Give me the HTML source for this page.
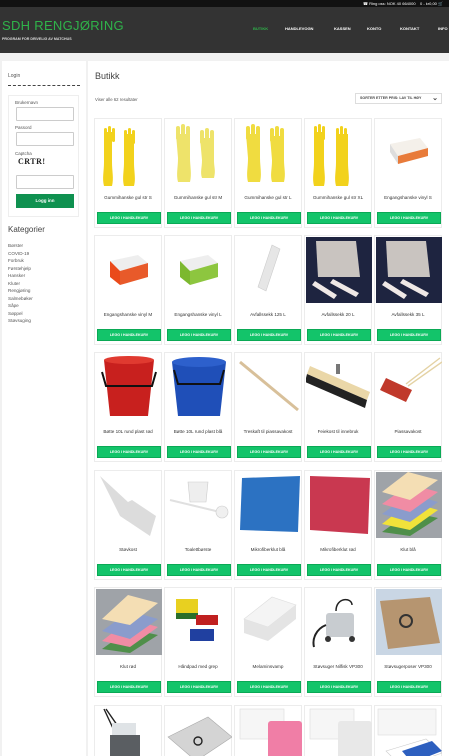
<!DOCTYPE html>
<html><head><meta charset="utf-8">
<style>
*{margin:0;padding:0;box-sizing:border-box}
html{width:449px;height:756px;overflow:hidden}
body{width:449px;height:756px;overflow:hidden;background:#f1f1f1;font-family:"Liberation Sans",sans-serif;position:relative}
.top{position:absolute;left:0;top:0;width:449px;height:7px;background:#111;color:#fff;font-size:4px;text-align:right;padding-right:6px;line-height:7px}
.hdr{position:absolute;left:0;top:7px;width:449px;height:46px;background:#333}
.logo{position:absolute;left:2px;top:11px;color:#2fb34a;font-size:13px;letter-spacing:0.3px}
.tag{position:absolute;left:2px;top:30px;color:#ddd;font-size:3.6px;font-weight:bold}
.nav{position:absolute;top:19px;font-size:4px;font-weight:bold;color:#fff}
.side{position:absolute;left:2px;top:61px;width:84px;height:700px;background:#fff}
.main{position:absolute;left:88px;top:61px;width:361px;height:700px;background:#fff}
.lbl{position:absolute;font-size:4.5px;color:#555}
.inp{position:absolute;left:14px;width:58px;height:14px;border:1px solid #ccc;border-radius:1px;background:#fff}
.card{position:absolute;width:68px;height:110px;border:1px solid #ececec;background:#fff}
.card svg{position:absolute;left:1px;top:1px}
.nm{position:absolute;left:0;top:76px;width:66px;text-align:center;font-size:4.6px;color:#333}
.btn{position:absolute;left:2px;top:93px;width:64px;height:12px;background:#13c46a;border:1px solid #0aa955;color:#fff;font-size:3.6px;font-weight:bold;text-align:center;line-height:10px}
.cat{font-size:4.6px;color:#555;line-height:7.5px}
</style></head><body>
<div class="top">&#9742; Ring oss: NOK 40 664000 &nbsp;&nbsp; 0 - kr0,00 &#128722;</div>
<div class="hdr">
<div class="logo">SDH RENGJØRING</div>
<div class="tag">PROGRAM FOR DRIVELIG AV MATCHUS</div>
<div class="nav" style="left:253px;color:#2fb34a">BUTIKK</div>
<div class="nav" style="left:285px">HANDLEVOGN</div>
<div class="nav" style="left:334px">KASSEN</div>
<div class="nav" style="left:367px">KONTO</div>
<div class="nav" style="left:400px">KONTAKT</div>
<div class="nav" style="left:438px">INFO</div>
</div>

<div class="side">
<div class="lbl" style="left:6px;top:12px;font-size:5px">Login</div>
<div style="position:absolute;left:6px;top:24px;width:72px;border-top:1px dashed #444"></div>
<div style="position:absolute;left:6px;top:34px;width:71px;height:122px;border:1px solid #eee"></div>
<div class="lbl" style="left:13px;top:39px">Brukernavn</div>
<div class="inp" style="top:46px"></div>
<div class="lbl" style="left:13px;top:64px">Passord</div>
<div class="inp" style="top:71px"></div>
<div class="lbl" style="left:13px;top:90px">Captcha</div>
<div style="position:absolute;left:16px;top:96px;font:bold 8px 'Liberation Serif',serif;color:#222;letter-spacing:0.5px">CRTR!</div>
<div class="inp" style="top:114px"></div>
<div style="position:absolute;left:14px;top:133px;width:58px;height:14px;background:#0f9150;color:#fff;font-size:4.5px;font-weight:bold;text-align:center;line-height:14px">Logg inn</div>
<div style="position:absolute;left:6px;top:164px;font-size:8px;color:#444">Kategorier</div>
<div style="position:absolute;left:6px;top:181px" class="cat">Børster<br>COVID-19<br>Forbruk<br>Førstehjelp<br>Hansker<br>Kluter<br>Rengjøring<br>Salmebøker<br>Såpe<br>Søppel<br>Støvsuging</div>
</div>

<div class="main">
<div style="position:absolute;left:7px;top:10px;font-size:9px;color:#444">Butikk</div>
<div class="lbl" style="left:7px;top:36px;font-size:4.3px">Viser alle 62 resultater</div>
<div style="position:absolute;left:267px;top:32px;width:87px;height:11px;border:1px solid #ddd;font-size:3.6px;color:#444;line-height:9px;padding-left:4px;font-weight:bold">SORTER ETTER PRIS: LAV TIL HØY<span style="position:absolute;right:3px;top:0;font-size:7px">&#8964;</span></div>
</div>

<div class="card" style="left:94px;top:118px"><svg width="66" height="68"><g fill="#f2d21c"><path d="M8 12h8v30c0 10 2 16 0 24h-8c-2-8 0-14 0-24z"/><rect x="8" y="8" width="3" height="12" rx="1.5"/><rect x="12" y="6" width="3" height="14" rx="1.5"/><rect x="16" y="8" width="3" height="14" rx="1.5"/><path d="M28 14h10v28c0 10 2 16 0 24h-10c-2-8 0-14 0-24z"/><rect x="28" y="10" width="3" height="12" rx="1.5"/><rect x="32" y="8" width="3" height="14" rx="1.5"/><rect x="36" y="10" width="3" height="14" rx="1.5"/></g></svg><div class="nm">Gummihanske gul str S</div><div class="btn">LEGG I HANDLEKURV</div></div>
<div class="card" style="left:164px;top:118px"><svg width="66" height="68"><g fill="#eee36a"><path d="M10 14h14v24c0 8 2 16 0 24h-12c-2-8 0-14 0-24z"/><rect x="10" y="6" width="4" height="14" rx="2"/><rect x="15" y="4" width="4" height="16" rx="2"/><rect x="20" y="6" width="4" height="14" rx="2"/><path d="M34 18h14v22c0 8 2 10 0 18h-12c-2-6 0-10 0-18z"/><rect x="34" y="10" width="4" height="14" rx="2"/><rect x="39" y="8" width="4" height="16" rx="2"/><rect x="44" y="10" width="4" height="14" rx="2"/></g></svg><div class="nm">Gummihanske gul str M</div><div class="btn">LEGG I HANDLEKURV</div></div>
<div class="card" style="left:234px;top:118px"><svg width="66" height="68"><g fill="#f0dc40"><path d="M10 14h14v24c0 8 2 16 0 24h-12c-2-8 0-14 0-24z"/><rect x="10" y="6" width="4" height="14" rx="2"/><rect x="15" y="4" width="4" height="16" rx="2"/><rect x="20" y="6" width="4" height="14" rx="2"/><path d="M34 16h14v24c0 8 2 14 0 22h-12c-2-8 0-12 0-22z"/><rect x="34" y="8" width="4" height="14" rx="2"/><rect x="39" y="6" width="4" height="16" rx="2"/><rect x="44" y="8" width="4" height="14" rx="2"/></g></svg><div class="nm">Gummihanske gul str L</div><div class="btn">LEGG I HANDLEKURV</div></div>
<div class="card" style="left:304px;top:118px"><svg width="66" height="68"><g fill="#f2d21c"><path d="M8 12h10v30c0 10 2 16 0 24h-10c-2-8 0-14 0-24z"/><rect x="8" y="6" width="3" height="12" rx="1.5"/><rect x="12" y="4" width="3" height="14" rx="1.5"/><rect x="16" y="6" width="3" height="14" rx="1.5"/><path d="M30 14h12v28c0 10 2 16 0 24h-12c-2-8 0-14 0-24z"/><rect x="30" y="8" width="3" height="12" rx="1.5"/><rect x="34" y="6" width="3" height="14" rx="1.5"/><rect x="38" y="8" width="3" height="14" rx="1.5"/></g></svg><div class="nm">Gummihanske gul str XL</div><div class="btn">LEGG I HANDLEKURV</div></div>
<div class="card" style="left:374px;top:118px"><svg width="66" height="68"><path d="M14 24l30-6 8 10-30 8z" fill="#f4f0ea"/><path d="M14 24l8 12v8l-8-12z" fill="#ddd"/><path d="M22 36l30-8v8l-30 8z" fill="#e87b3a"/></svg><div class="nm">Engangshanske vinyl S</div><div class="btn">LEGG I HANDLEKURV</div></div>

<div class="card" style="left:94px;top:235px"><svg width="66" height="68"><path d="M14 24l28-6 10 8-28 8z" fill="#eee"/><path d="M24 34l28-8v14l-28 8z" fill="#e85a2a"/><path d="M14 24v16l10 8v-14z" fill="#ea4a1a"/></svg><div class="nm">Engangshanske vinyl M</div><div class="btn">LEGG I HANDLEKURV</div></div>
<div class="card" style="left:164px;top:235px"><svg width="66" height="68"><path d="M14 24l28-6 10 8-28 8z" fill="#eee"/><path d="M24 34l28-8v14l-28 8z" fill="#8dc63f"/><path d="M14 24v16l10 8v-14z" fill="#7cb82f"/></svg><div class="nm">Engangshanske vinyl L</div><div class="btn">LEGG I HANDLEKURV</div></div>
<div class="card" style="left:234px;top:235px"><svg width="66" height="68"><path d="M36 8l8 4-14 42-8-4z" fill="#e6e6e6" stroke="#ccc" stroke-width=".6"/></svg><div class="nm">Avfallssekk 125 L</div><div class="btn">LEGG I HANDLEKURV</div></div>
<div class="card" style="left:304px;top:235px"><svg width="66" height="68"><rect width="66" height="66" fill="#1e2440"/><path d="M10 4h40l4 36h-42z" fill="#c9c4c0"/><path d="M6 48l22 14 3-4-22-14zM24 46l26 14 3-4-26-14z" fill="#efe8e6"/></svg><div class="nm">Avfallssekk 20 L</div><div class="btn">LEGG I HANDLEKURV</div></div>
<div class="card" style="left:374px;top:235px"><svg width="66" height="68"><rect width="66" height="66" fill="#1e2440"/><path d="M10 4h40l4 36h-42z" fill="#c9c4c0"/><path d="M6 48l22 14 3-4-22-14zM24 46l26 14 3-4-26-14z" fill="#efe8e6"/></svg><div class="nm">Avfallssekk 35 L</div><div class="btn">LEGG I HANDLEKURV</div></div>

<div class="card" style="left:94px;top:352px"><svg width="66" height="68"><path d="M8 6h50l-6 56h-38z" fill="#c8201e"/><ellipse cx="33" cy="6" rx="25" ry="4" fill="#e03a30"/><path d="M6 18l4 14h46l4-14" fill="none" stroke="#111" stroke-width="2"/></svg><div class="nm">Bøtte 10L rund plast rød</div><div class="btn">LEGG I HANDLEKURV</div></div>
<div class="card" style="left:164px;top:352px"><svg width="66" height="68"><path d="M6 8h54l-6 54h-42z" fill="#1f4fb8"/><ellipse cx="33" cy="8" rx="27" ry="5" fill="#2d60cc"/><path d="M8 16l4 14h42l4-14" fill="none" stroke="#111" stroke-width="2"/></svg><div class="nm">Bøtte 10L rund plast blå</div><div class="btn">LEGG I HANDLEKURV</div></div>
<div class="card" style="left:234px;top:352px"><svg width="66" height="68"><path d="M4 8l58 48" stroke="#d8c09a" stroke-width="3"/></svg><div class="nm">Treskaft til piassavakost</div><div class="btn">LEGG I HANDLEKURV</div></div>
<div class="card" style="left:304px;top:352px"><svg width="66" height="68"><path d="M4 12l60 26-3 8-60-26z" fill="#ead7a8"/><path d="M1 20l60 26-2 8-60-26z" fill="#222"/><rect x="30" y="10" width="4" height="10" fill="#777"/></svg><div class="nm">Feiekost til innebruk</div><div class="btn">LEGG I HANDLEKURV</div></div>
<div class="card" style="left:374px;top:352px"><svg width="66" height="68"><path d="M30 30l34-26M32 32l34-24" stroke="#e4d2a4" stroke-width="1.4"/><path d="M10 24l26 12-6 12-26-12z" fill="#c0392b"/></svg><div class="nm">Piassavakost</div><div class="btn">LEGG I HANDLEKURV</div></div>

<div class="card" style="left:94px;top:470px"><svg width="66" height="68"><path d="M4 4l28 26 4-2 24 16-6 20-30-20z" fill="#dcdcdc"/></svg><div class="nm">Støvkost</div><div class="btn">LEGG I HANDLEKURV</div></div>
<div class="card" style="left:164px;top:470px"><svg width="66" height="68"><path d="M22 10h20l-2 20h-16z" fill="#eee" stroke="#ccc" stroke-width=".6"/><path d="M4 28l50 12" stroke="#e0e0e0" stroke-width="2"/><circle cx="56" cy="40" r="6" fill="#f0f0f0" stroke="#ccc" stroke-width=".6"/></svg><div class="nm">Toalettbørste</div><div class="btn">LEGG I HANDLEKURV</div></div>
<div class="card" style="left:234px;top:470px"><svg width="66" height="68"><path d="M6 6l58-2-2 56-58-2z" fill="#2c72c2"/></svg><div class="nm">Mikrofiberklut blå</div><div class="btn">LEGG I HANDLEKURV</div></div>
<div class="card" style="left:304px;top:470px"><svg width="66" height="68"><path d="M4 4l60 2-2 56-58-4z" fill="#c93850"/></svg><div class="nm">Mikrofiberklut rød</div><div class="btn">LEGG I HANDLEKURV</div></div>
<div class="card" style="left:374px;top:470px"><svg width="66" height="68"><rect width="66" height="66" fill="#9fa3a8"/><path d="M6 60l28-20 28 6-28 18z" fill="#4f8f4a"/><path d="M6 52l28-22 28 8-28 20z" fill="#f1e23a"/><path d="M6 42l28-20 28 8-28 20z" fill="#8a9ccc"/><path d="M6 32l28-20 28 8-28 20z" fill="#f08ca4"/><path d="M6 20l26-20 30 8-28 20z" fill="#f4deb4"/></svg><div class="nm">Klut blå</div><div class="btn">LEGG I HANDLEKURV</div></div>

<div class="card" style="left:94px;top:587px"><svg width="66" height="68"><rect width="66" height="66" fill="#9fa3a8"/><path d="M6 60l28-20 28 6-28 18z" fill="#4f8f4a"/><path d="M6 52l28-22 28 8-28 20z" fill="#f08ca4"/><path d="M6 42l28-20 28 8-28 20z" fill="#8a9ccc"/><path d="M6 30l26-24 30 8-28 22z" fill="#f4deb4"/></svg><div class="nm">Klut rød</div><div class="btn">LEGG I HANDLEKURV</div></div>
<div class="card" style="left:164px;top:587px"><svg width="66" height="68"><rect x="10" y="10" width="22" height="14" fill="#e8d020"/><rect x="10" y="24" width="22" height="6" fill="#2a6e2a"/><rect x="30" y="26" width="22" height="10" fill="#c02020"/><rect x="24" y="40" width="24" height="12" fill="#2040a0"/></svg><div class="nm">Håndpad med grep</div><div class="btn">LEGG I HANDLEKURV</div></div>
<div class="card" style="left:234px;top:587px"><svg width="66" height="68"><path d="M8 30l28-22 24 8-28 22z" fill="#f4f4f4" stroke="#ddd" stroke-width=".6"/><path d="M8 30v14l24 8v-14zM32 38l28-22v14l-28 22z" fill="#e4e4e4"/></svg><div class="nm">Melaminsvamp</div><div class="btn">LEGG I HANDLEKURV</div></div>
<div class="card" style="left:304px;top:587px"><svg width="66" height="68"><path d="M30 22c0-14 16-14 16-6" fill="none" stroke="#222" stroke-width="1.5"/><rect x="20" y="24" width="28" height="24" rx="3" fill="#c8ccd0"/><path d="M20 36c-10 4-14 14-12 22" stroke="#222" stroke-width="2" fill="none"/><circle cx="22" cy="50" r="3" fill="#333"/><circle cx="46" cy="50" r="3" fill="#333"/></svg><div class="nm">Støvsuger Nilfisk VP300</div><div class="btn">LEGG I HANDLEKURV</div></div>
<div class="card" style="left:374px;top:587px"><svg width="66" height="68"><rect width="66" height="66" fill="#c9d6e4"/><path d="M4 12l50-4 10 46-52 6z" fill="#b69570"/><circle cx="30" cy="32" r="6" fill="none" stroke="#333" stroke-width="2"/></svg><div class="nm">Støvsugerposer VP300</div><div class="btn">LEGG I HANDLEKURV</div></div>

<div class="card" style="left:94px;top:705px"><svg width="66" height="68"><path d="M8 2l14 30M10 2l36 52" stroke="#222" stroke-width="1.4" fill="none"/><rect x="16" y="16" width="24" height="12" fill="#dfe3e6"/><rect x="14" y="28" width="30" height="26" fill="#5a5e62"/></svg><div class="nm">Støvsuger</div><div class="btn">LEGG I HANDLEKURV</div></div>
<div class="card" style="left:164px;top:705px"><svg width="66" height="68"><path d="M2 30l40-20 24 20-36 24z" fill="#d4d4d4" stroke="#aaa" stroke-width=".6"/><circle cx="32" cy="34" r="4" fill="none" stroke="#222" stroke-width="1.4"/></svg><div class="nm">Støvsugerpose</div><div class="btn">LEGG I HANDLEKURV</div></div>
<div class="card" style="left:234px;top:705px"><svg width="66" height="68"><rect x="4" y="2" width="44" height="30" fill="#f6f6f6" stroke="#ddd" stroke-width=".6"/><rect x="32" y="14" width="34" height="52" rx="3" fill="#f07ea6"/></svg><div class="nm">Scott såpe</div><div class="btn">LEGG I HANDLEKURV</div></div>
<div class="card" style="left:304px;top:705px"><svg width="66" height="68"><rect x="4" y="2" width="44" height="30" fill="#f6f6f6" stroke="#ddd" stroke-width=".6"/><rect x="32" y="14" width="34" height="52" rx="3" fill="#e8e8e8"/></svg><div class="nm">Scott såpe</div><div class="btn">LEGG I HANDLEKURV</div></div>
<div class="card" style="left:374px;top:705px"><svg width="66" height="68"><rect x="2" y="2" width="58" height="26" fill="#f6f6f6" stroke="#ddd" stroke-width=".6"/><path d="M10 44l40-12 16 14-40 14z" fill="#fff" stroke="#ccc" stroke-width=".6"/><path d="M26 44l30-10 10 10-30 12z" fill="#2d5fbf"/></svg><div class="nm">Kleenex</div><div class="btn">LEGG I HANDLEKURV</div></div>
</body></html>
